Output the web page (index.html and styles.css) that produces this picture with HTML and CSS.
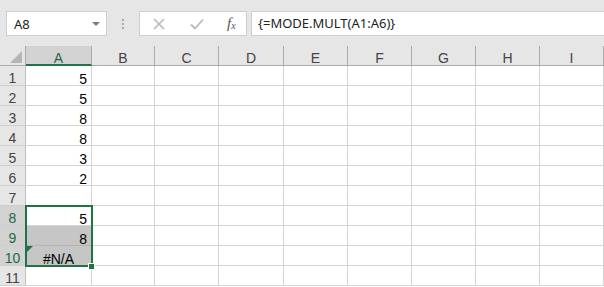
FILE: index.html
```html
<!DOCTYPE html>
<html lang="en">

<head>
    <meta charset="UTF-8">
    <meta name="viewport" content="width=device-width, initial-scale=1.0">
    <title>MODE.MULT</title>
    <link rel="stylesheet" href="styles.css">
</head>

<body>

    <div class="toolbar">
        <div class="name-box">
            <span>A8</span>
            <span class="drop"></span>
        </div>
        <div class="grip"><i></i><i></i><i></i></div>
        <div class="buttons">
            <svg class="btn" width="12" height="12" viewBox="0 0 12 12">
                <path d="M1 1 L11 11 M11 1 L1 11" stroke="#b9b9b9" stroke-width="1.6" fill="none" />
            </svg>
            <svg class="btn" width="14" height="12" viewBox="0 0 14 12">
                <path d="M1 6.5 L5 10.5 L13 1.5" stroke="#b9b9b9" stroke-width="1.8" fill="none" />
            </svg>
            <span class="fx">f<sub>x</sub></span>
        </div>
        <div class="formula">{=MODE.MULT(A1:A6)}</div>
    </div>

    <div class="sheet">
        <div class="corner"></div>
        <div class="col sel">A</div>
        <div class="col">B</div>
        <div class="col">C</div>
        <div class="col">D</div>
        <div class="col">E</div>
        <div class="col">F</div>
        <div class="col">G</div>
        <div class="col">H</div>
        <div class="col">I</div>

        <div class="row">1</div><div class="cell num">5</div><div class="cell"></div><div class="cell"></div><div class="cell"></div><div class="cell"></div><div class="cell"></div><div class="cell"></div><div class="cell"></div><div class="cell"></div>
        <div class="row">2</div><div class="cell num">5</div><div class="cell"></div><div class="cell"></div><div class="cell"></div><div class="cell"></div><div class="cell"></div><div class="cell"></div><div class="cell"></div><div class="cell"></div>
        <div class="row">3</div><div class="cell num">8</div><div class="cell"></div><div class="cell"></div><div class="cell"></div><div class="cell"></div><div class="cell"></div><div class="cell"></div><div class="cell"></div><div class="cell"></div>
        <div class="row">4</div><div class="cell num">8</div><div class="cell"></div><div class="cell"></div><div class="cell"></div><div class="cell"></div><div class="cell"></div><div class="cell"></div><div class="cell"></div><div class="cell"></div>
        <div class="row">5</div><div class="cell num">3</div><div class="cell"></div><div class="cell"></div><div class="cell"></div><div class="cell"></div><div class="cell"></div><div class="cell"></div><div class="cell"></div><div class="cell"></div>
        <div class="row">6</div><div class="cell num">2</div><div class="cell"></div><div class="cell"></div><div class="cell"></div><div class="cell"></div><div class="cell"></div><div class="cell"></div><div class="cell"></div><div class="cell"></div>
        <div class="row">7</div><div class="cell"></div><div class="cell"></div><div class="cell"></div><div class="cell"></div><div class="cell"></div><div class="cell"></div><div class="cell"></div><div class="cell"></div><div class="cell"></div>
        <div class="row sel">8</div><div class="cell num">5</div><div class="cell"></div><div class="cell"></div><div class="cell"></div><div class="cell"></div><div class="cell"></div><div class="cell"></div><div class="cell"></div><div class="cell"></div>
        <div class="row sel">9</div><div class="cell num picked">8</div><div class="cell"></div><div class="cell"></div><div class="cell"></div><div class="cell"></div><div class="cell"></div><div class="cell"></div><div class="cell"></div><div class="cell"></div>
        <div class="row sel">10</div><div class="cell center picked error">#N/A</div><div class="cell"></div><div class="cell"></div><div class="cell"></div><div class="cell"></div><div class="cell"></div><div class="cell"></div><div class="cell"></div><div class="cell"></div>
        <div class="row">11</div><div class="cell"></div><div class="cell"></div><div class="cell"></div><div class="cell"></div><div class="cell"></div><div class="cell"></div><div class="cell"></div><div class="cell"></div><div class="cell"></div>

        <div class="selection"><span class="handle"></span></div>
    </div>

</body>

</html>
```

FILE: styles.css
```css
body {
    margin: 0;
    width: 604px;
    height: 287px;
    overflow: hidden;
    background-color: #ffffff;
    font-family: 'Liberation Sans', Arial, sans-serif;
}

/* formula bar */

.toolbar {
    display: flex;
    align-items: center;
    height: 46px;
    box-sizing: border-box;
    padding: 11px 0 10px 6px;
    background-color: #e6e6e6;
}

.name-box {
    display: flex;
    align-items: center;
    justify-content: space-between;
    width: 101px;
    height: 25px;
    box-sizing: border-box;
    padding: 0 6px 0 7px;
    background-color: #ffffff;
    border: 1px solid #cfcfcf;
    font-family: 'Noto Sans', sans-serif;
    font-size: 13px;
    color: #222;
}

.drop {
    width: 0;
    height: 0;
    border-left: 4px solid transparent;
    border-right: 4px solid transparent;
    border-top: 4px solid #7a7a7a;
}

.grip {
    display: flex;
    flex-direction: column;
    gap: 2px;
    margin: 0 15px 0 15px;
}

.grip i {
    display: block;
    width: 2px;
    height: 2px;
    background-color: #a8a8a8;
}

.buttons {
    display: flex;
    align-items: center;
    width: 108px;
    height: 25px;
    box-sizing: border-box;
    padding: 0 0 0 13px;
    background-color: #ffffff;
    border: 1px solid #cfcfcf;
}

.btn {
    margin-right: 25px;
}

.btn + .btn {
    margin-right: 23px;
}

.fx {
    font-family: 'Liberation Serif', serif;
    font-style: italic;
    font-size: 15px;
    color: #555;
}

.fx sub {
    font-size: 10px;
    vertical-align: -1px;
}

.formula {
    flex: 1;
    height: 25px;
    box-sizing: border-box;
    margin-left: 4px;
    padding-left: 6px;
    line-height: 23px;
    background-color: #ffffff;
    border: 1px solid #cfcfcf;
    border-right: none;
    font-family: 'Noto Sans', sans-serif;
    font-size: 13px;
    color: #222;
}

/* grid */

.sheet {
    position: relative;
    display: grid;
    grid-template-columns: 26px 66px 63px 64px 65px 64px 64px 64px 64px 64px;
    grid-auto-rows: 20px;
    font-size: 14px;
}

.corner,
.col,
.row,
.cell {
    box-sizing: border-box;
    line-height: 14px;
    padding-top: 5px;
}

.corner {
    position: relative;
    background-color: #e6e6e6;
    border-right: 1px solid #ababab;
    border-bottom: 1px solid #ababab;
}

.corner::after {
    content: "";
    position: absolute;
    right: 3px;
    bottom: 2px;
    border-left: 12px solid transparent;
    border-bottom: 12px solid #b5b5b5;
}

.col {
    text-align: center;
    background-color: #e6e6e6;
    color: #444;
    border-right: 1px solid #ababab;
    border-bottom: 1px solid #ababab;
}

.col.sel {
    background-color: #d2d2d2;
    color: #1d6b40;
    border-bottom: 2px solid #217346;
}

.row {
    text-align: center;
    padding-top: 5px;
    background-color: #e6e6e6;
    color: #444;
    border-right: 1px solid #c0c0c0;
    border-bottom: 1px solid #cfcfcf;
}

.row.sel {
    background-color: #d2d2d2;
    color: #1d6b40;
}

.cell {
    border-right: 1px solid #d4d4d4;
    border-bottom: 1px solid #d4d4d4;
    padding-top: 6px;
    color: #000;
}

.num {
    text-align: right;
    padding-right: 4px;
}

.center {
    text-align: center;
}

.picked {
    background-color: #c6c6c6;
    border-bottom-color: #b4b4b4;
}

.error {
    position: relative;
}

.error::before {
    content: "";
    position: absolute;
    left: 1px;
    top: 0;
    border-top: 6px solid #217346;
    border-right: 6px solid transparent;
}

.selection {
    position: absolute;
    left: 25px;
    top: 159px;
    width: 68px;
    height: 62px;
    box-sizing: border-box;
    border: 2px solid #217346;
}

.handle {
    position: absolute;
    right: -4px;
    bottom: -5px;
    width: 5px;
    height: 5px;
    background-color: #217346;
    border: 1px solid #ffffff;
}
```
